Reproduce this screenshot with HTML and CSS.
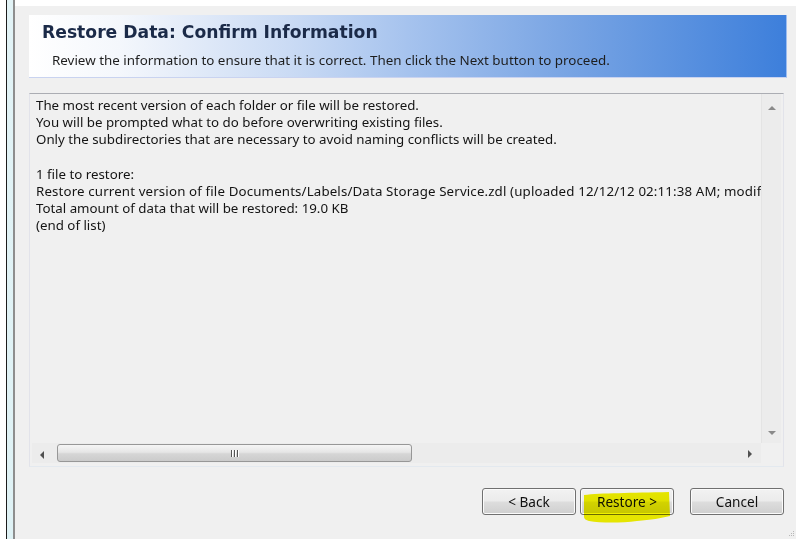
FILE: index.html
```html
<!DOCTYPE html>
<html lang="en">
<head>
<meta charset="utf-8">
<title>Restore Data</title>
<link rel="stylesheet" href="styles.css">
</head>
<body>
<div class="window">
  <div class="frame">
    <span class="frame-outer"></span>
    <span class="frame-line"></span>
    <span class="frame-glass"></span>
    <span class="frame-edge"></span>
  </div>
  <div class="main">
    <div class="topstrip"></div>
    <header class="banner">
      <h1 class="banner-title">Restore Data: Confirm Information</h1>
      <p class="banner-sub">Review the information to ensure that it is correct. Then click the Next button to proceed.</p>
    </header>

    <div class="listbox">
      <div class="viewport">
        <div class="lines">
          <div>The most recent version of each folder or file will be restored.</div>
          <div>You will be prompted what to do before overwriting existing files.</div>
          <div>Only the subdirectories that are necessary to avoid naming conflicts will be created.</div>
          <div>&nbsp;</div>
          <div>1 file to restore:</div>
          <div class="line-wide">Restore current version of file Documents/Labels/Data Storage Service.zdl (uploaded 12/12/12 02:11:38 AM; modified 12/11/12 04:52:10 PM)</div>
          <div>Total amount of data that will be restored: 19.0 KB</div>
          <div>(end of list)</div>
        </div>
      </div>
      <div class="vscroll">
        <span class="arrow arrow-up"></span>
        <span class="arrow arrow-down"></span>
      </div>
      <div class="hscroll">
        <span class="arrow arrow-left"></span>
        <div class="htrack">
          <div class="thumb"><span class="grip-lines"><i></i><i></i><i></i></span></div>
        </div>
        <span class="arrow arrow-right"></span>
      </div>
      <div class="corner"></div>
    </div>

    <div class="actions">
      <button class="btn">&lt; Back</button>
      <button class="btn btn-primary">Restore &gt;</button>
      <button class="btn btn-cancel">Cancel</button>
      <svg class="marker" width="92" height="34" viewBox="0 0 92 34" aria-hidden="true">
        <path d="M3 5 C20 3 50 3 88 2 L89 26 C80 28 70 30 56 31 C40 33 20 33 8 31 C5 30 3 29 3 27 Z" fill="#f4f400"/>
      </svg>
    </div>
  </div>
  <svg class="resize-grip" width="8" height="8" viewBox="0 0 8 8" aria-hidden="true">
    <rect x="5" y="1" width="1" height="1" fill="#b8b8b8"/>
    <rect x="3" y="3" width="1" height="1" fill="#b8b8b8"/>
    <rect x="5" y="3" width="1" height="1" fill="#b8b8b8"/>
    <rect x="1" y="5" width="1" height="1" fill="#b8b8b8"/>
    <rect x="3" y="5" width="1" height="1" fill="#b8b8b8"/>
    <rect x="5" y="5" width="1" height="1" fill="#b8b8b8"/>
  </svg>
</div>
</body>
</html>
```

FILE: styles.css
```css
html, body {
  margin: 0;
  padding: 0;
}

body {
  width: 796px;
  height: 539px;
  overflow: hidden;
  background: #f0f0f0;
  font-family: "Noto Sans", "Open Sans", sans-serif;
  color: #111;
}

.window {
  position: relative;
  display: flex;
  height: 539px;
}

/* window chrome on the left edge */
.frame {
  display: flex;
  flex: none;
}
.frame span { display: block; height: 100%; }
.frame-outer { width: 6px; background: #ffffff; }
.frame-line { width: 1px; background: #1c1c1c; }
.frame-glass { width: 6px; background: linear-gradient(#e2f3f6, #dff2f5); }
.frame-edge { width: 2px; background: #8e8e8e; }

.main {
  flex: 1;
  display: flex;
  flex-direction: column;
  padding: 0 9px 0 14px;
}

.topstrip {
  height: 6px;
  margin: 0 -9px 0 -14px;
  background: #ffffff;
}

/* wizard page header */
.banner {
  margin-top: 9px;
  height: 63px;
  box-sizing: border-box;
  border-bottom: 1px solid #c9d3f0;
  border-right: 1px solid #9dbdf0;
  background: linear-gradient(90deg, #ffffff 0%, #f4f7fc 12%, #c9daf4 35%, #a6c3ee 50%, #7ba6e4 70%, #3d7fdb 100%);
  padding: 6px 0 0 13px;
}

.banner-title {
  margin: 0;
  font-family: "DejaVu Sans", sans-serif;
  font-weight: bold;
  font-size: 17.2px;
  line-height: 22px;
  color: #1b2a48;
}

.banner-sub {
  margin: 9px 0 0 10px;
  font-size: 13.4px;
  line-height: 16px;
  color: #1e1e1e;
}

/* read-only summary list with scrollbars */
.listbox {
  margin-top: 15px;
  height: 374px;
  box-sizing: border-box;
  border: 1px solid #e2e3ea;
  border-top-color: #abadb3;
  border-bottom-color: #e3e9ef;
  padding: 0 2px 3px 1px;
  display: grid;
  grid-template-columns: 1fr 20px;
  grid-template-rows: 1fr 20px;
  margin-right: 3px;
}

.viewport {
  overflow: hidden;
  padding: 3px 0 0 5px;
}

.lines {
  white-space: nowrap;
  font-size: 13.3px;
  line-height: 17.2px;
  color: #141414;
}

.line-wide {
  letter-spacing: 0.14px;
}

.vscroll {
  position: relative;
  background: #ececec;
  border-left: 1px solid #e4e4e4;
}

.hscroll {
  position: relative;
  display: flex;
  align-items: stretch;
  background: #ececec;
  margin-left: 1px;
}

.corner {
  background: #f0f0f0;
}

.arrow {
  position: absolute;
  width: 0;
  height: 0;
  border-style: solid;
  border-color: transparent;
}
.arrow-up {
  left: 6px;
  top: 12px;
  border-width: 0 4px 4px 4px;
  border-bottom-color: #8a8a8a;
}
.arrow-down {
  left: 6px;
  bottom: 8px;
  border-width: 4px 4px 0 4px;
  border-top-color: #8a8a8a;
}
.arrow-left {
  left: 8px;
  top: 8px;
  border-width: 4px 4px 4px 0;
  border-right-color: #505050;
}
.arrow-right {
  right: 9px;
  top: 7px;
  border-width: 4px 0 4px 4px;
  border-left-color: #505050;
}

.htrack {
  flex: 1;
  margin: 1px 22px 0 25px;
  position: relative;
}

.thumb {
  width: 355px;
  height: 18px;
  box-sizing: border-box;
  border: 1px solid #979797;
  border-radius: 3px;
  background: linear-gradient(#f5f5f5 0%, #e6e6e6 45%, #d6d6d6 55%, #cbcbcb 100%);
  display: flex;
  justify-content: center;
  align-items: center;
}

.grip-lines {
  display: flex;
  gap: 2px;
}
.grip-lines i {
  display: block;
  width: 1px;
  height: 7px;
  background: #555;
  box-shadow: 1px 0 0 #fff;
}

/* wizard buttons */
.actions {
  position: relative;
  margin-top: 21px;
  display: flex;
  justify-content: flex-end;
  gap: 4px;
  padding-right: 3px;
}

.btn {
  width: 94px;
  height: 27px;
  box-sizing: border-box;
  border: 1px solid #707070;
  border-radius: 3px;
  background: linear-gradient(#f2f2f2 0%, #ebebeb 48%, #dddddd 52%, #cfcfcf 100%);
  box-shadow: inset 0 0 0 1px #fbfbfb;
  font-family: "Noto Sans", "Open Sans", sans-serif;
  font-size: 13.6px;
  color: #111;
  padding: 0;
}

.btn-cancel {
  margin-left: 12px;
}

.marker {
  position: absolute;
  left: 552px;
  top: 2px;
  mix-blend-mode: multiply;
  pointer-events: none;
}

.resize-grip {
  position: absolute;
  right: 0;
  bottom: 1px;
}
```
